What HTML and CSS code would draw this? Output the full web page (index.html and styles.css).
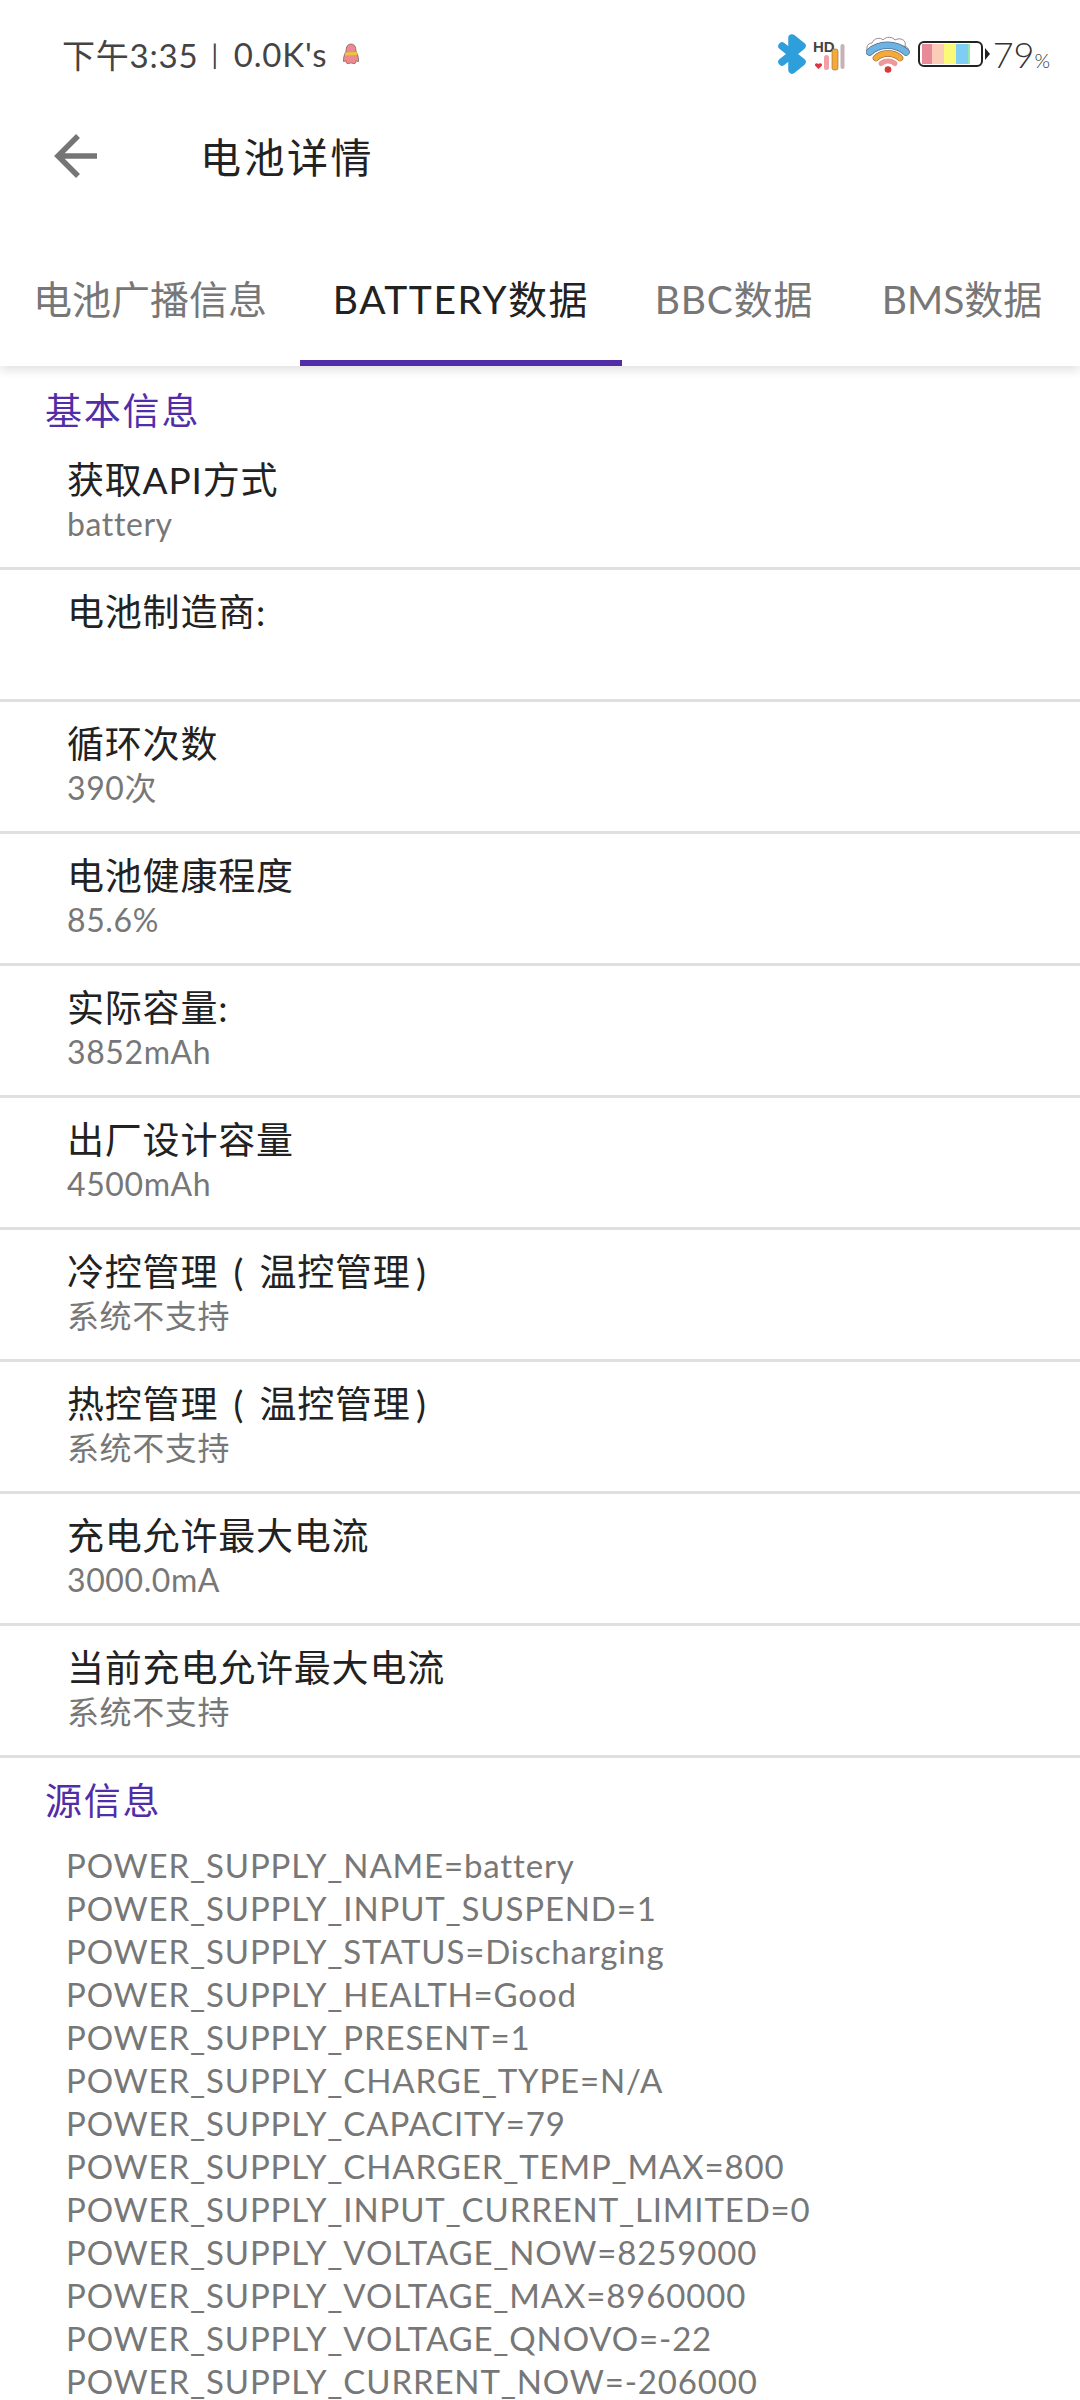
FILE: index.html
```html
<!DOCTYPE html>
<html>

<head>
  <meta charset="utf-8">
  <link rel="stylesheet" href="styles.css">
</head>

<body>

  <!-- status bar -->
  <div class="status">
    <div class="status-left">
      <span>下午3:35</span><span class="sep">|</span><span>0.0K's</span>
      <svg class="qq" width="18" height="22" viewBox="0 0 18 22">
        <path d="M9 1C5.500 1 4 4 4 8C2.500 11 1 15 1.500 18.500C3 18.500 3.500 18 4 17.500C4.500 19 3.500 20.500 6 20.500C7.500 20.500 8.500 20 9 20C9.500 20 10.500 20.500 12 20.500C14.500 20.500 13.500 19 14 17.500C14.500 18 15 18.500 16.500 18.500C17 15 15.500 11 14 8C14 4 12.500 1 9 1Z" fill="#ee8a8e" stroke="#5a4a4a" stroke-width="0.6" />
        <path d="M3 9.500L15 9L15 12L3 12.500Z" fill="#e6c83c" />
      </svg>
    </div>
    <div class="status-right">
      <!-- bluetooth -->
      <svg class="ic" width="29" height="42" viewBox="0 0 29 42">
        <path d="M4 13L24 29L14 37V5L24 13L4 29" fill="none" stroke="#2f9fdc" stroke-width="7.500" stroke-linecap="round" stroke-linejoin="round" />
      </svg>
      <!-- HD signal -->
      <svg class="ic ic-signal" width="32" height="34" viewBox="0 0 32 34">
        <text x="0" y="15" class="hd">HD</text>
        <path d="M5.500 32L2 28.500C1.500 26.500 4 25.500 5.500 27C7 25.500 9.500 26.500 9 28.500Z" fill="#d8383c" />
        <rect x="11" y="18" width="5" height="15" rx="2.500" fill="#f2a0a6" />
        <rect x="19" y="12" width="6" height="21" rx="2" fill="#f5a93a" stroke="#8a6a3a" stroke-width="0.6" />
        <rect x="27.500" y="7" width="4" height="25" rx="2" fill="#c6b2b6" />
      </svg>
      <!-- wifi -->
      <svg class="ic ic-wifi" width="44" height="38" viewBox="0 0 44 38">
        <path d="M3 19C-1 14 1 8 6 8C8 3 14 2 17 5C20 1 27 2 29 5C34 2 41 5 39 11C44 13 43 18 41 20" fill="#fff" stroke="#9c8a8e" stroke-width="1" />
        <path d="M3.500 17C13 8 30 8 40 17" fill="none" stroke="#5a6a80" stroke-width="7.500" stroke-linecap="round" />
        <path d="M3.500 17C13 8 30 8 40 17" fill="none" stroke="#6cb4e4" stroke-width="6" stroke-linecap="round" />
        <path d="M10 23C16 17 28 17 34 23" fill="none" stroke="#7a5a30" stroke-width="6.500" stroke-linecap="round" />
        <path d="M10 23C16 17 28 17 34 23" fill="none" stroke="#f5a93a" stroke-width="5.500" stroke-linecap="round" />
        <path d="M15 28.500C19 25 25 25 29 28.500" fill="none" stroke="#ef989c" stroke-width="5" stroke-linecap="round" />
        <circle cx="22" cy="34.500" r="3.300" fill="#d8383c" />
      </svg>
      <!-- battery -->
      <div class="battery">
        <div class="cell">
          <i class="b1"></i><i class="b2"></i><i class="b3"></i><i class="b4"></i><i class="b5"></i>
        </div>
        <div class="nub"></div>
      </div>
      <span class="pct">79<small>%</small></span>
    </div>
  </div>

  <!-- title -->
  <div class="toolbar">
    <svg class="back" width="44" height="46" viewBox="0 0 44 46">
      <path d="M43 23H5M24 3L4 23L24 43" fill="none" stroke="#757575" stroke-width="5.500" />
    </svg>
    <h1>电池详情</h1>
  </div>

  <!-- tabs -->
  <div class="tabs">
    <div class="tab t1">电池广播信息</div>
    <div class="tab t2 on">BATTERY数据</div>
    <div class="tab t3">BBC数据</div>
    <div class="tab t4">BMS数据</div>
  </div>

  <div class="section">基本信息</div>

  <div class="row">
    <p class="name">获取API方式</p>
    <p class="val">battery</p>
  </div>
  <div class="row">
    <p class="name">电池制造商:</p>
    <p class="val"></p>
  </div>
  <div class="row">
    <p class="name">循环次数</p>
    <p class="val">390次</p>
  </div>
  <div class="row">
    <p class="name">电池健康程度</p>
    <p class="val">85.6%</p>
  </div>
  <div class="row">
    <p class="name">实际容量:</p>
    <p class="val">3852mAh</p>
  </div>
  <div class="row">
    <p class="name">出厂设计容量</p>
    <p class="val">4500mAh</p>
  </div>
  <div class="row">
    <p class="name">冷控管理 ( 温控管理&thinsp;)</p>
    <p class="val">系统不支持</p>
  </div>
  <div class="row">
    <p class="name">热控管理 ( 温控管理&thinsp;)</p>
    <p class="val">系统不支持</p>
  </div>
  <div class="row">
    <p class="name">充电允许最大电流</p>
    <p class="val">3000.0mA</p>
  </div>
  <div class="row">
    <p class="name">当前充电允许最大电流</p>
    <p class="val">系统不支持</p>
  </div>

  <div class="section section-src">源信息</div>

  <div class="source">
    <div>POWER_SUPPLY_NAME=battery</div>
    <div>POWER_SUPPLY_INPUT_SUSPEND=1</div>
    <div>POWER_SUPPLY_STATUS=Discharging</div>
    <div>POWER_SUPPLY_HEALTH=Good</div>
    <div>POWER_SUPPLY_PRESENT=1</div>
    <div>POWER_SUPPLY_CHARGE_TYPE=N/A</div>
    <div>POWER_SUPPLY_CAPACITY=79</div>
    <div>POWER_SUPPLY_CHARGER_TEMP_MAX=800</div>
    <div>POWER_SUPPLY_INPUT_CURRENT_LIMITED=0</div>
    <div>POWER_SUPPLY_VOLTAGE_NOW=8259000</div>
    <div>POWER_SUPPLY_VOLTAGE_MAX=8960000</div>
    <div>POWER_SUPPLY_VOLTAGE_QNOVO=-22</div>
    <div>POWER_SUPPLY_CURRENT_NOW=-206000</div>
  </div>

</body>

</html>
```

FILE: styles.css
```css
html, body {
  margin: 0;
  height: 2400px;
  overflow: hidden;
  background: #fff;
}

body {
  font-family: Lato, "Noto Sans CJK SC", sans-serif;
}

p {
  margin: 0;
}

.status {
  display: flex;
  justify-content: space-between;
  align-items: center;
  height: 108px;
  padding: 0 30px 0 62px;
  color: #444;
}

.status-left {
  display: flex;
  align-items: center;
  font-size: 33px;
  letter-spacing: 0.800px;
}

.sep {
  margin: 0 15px 0 13px;
  font-size: 26px;
}

.qq {
  margin-left: 15px;
}

.status-right {
  display: flex;
  align-items: center;
}

.ic-signal {
  margin-left: 6px;
}

.ic-wifi {
  margin-left: 21px;
}

.hd {
  font-family: "Liberation Sans", sans-serif;
  font-size: 15px;
  font-weight: bold;
  fill: #444;
}

.battery {
  display: flex;
  align-items: center;
  margin-left: 8px;
}

.cell {
  display: flex;
  box-sizing: border-box;
  width: 65px;
  height: 26px;
  padding: 1px 2px;
  border: 2px solid #222;
  border-radius: 6px;
}

.cell i {
  display: block;
  height: 100%;
}

.b1 { width: 10px; background: #e88a98; }
.b2 { width: 12px; background: #fbcdb8; }
.b3 { width: 12px; background: #fafa78; }
.b4 { width: 12px; background: #7fcdf5; }
.b5 { width: 2px; background: #96e8a8; }

.nub {
  width: 0;
  height: 0;
  margin-left: 2px;
  border-top: 6px solid transparent;
  border-bottom: 6px solid transparent;
  border-left: 5px solid #222;
}

.pct {
  margin-left: 3px;
  font-size: 36px;
  font-weight: 300;
  color: #333;
}

.pct small {
  font-size: 20px;
}

.toolbar {
  display: flex;
  align-items: center;
  height: 96px;
  padding-left: 54px;
}

.back {
  margin-right: 102px;
}

h1 {
  margin: -2px 0 0;
  font-size: 41px;
  font-weight: 400;
  letter-spacing: 2.500px;
  color: #222;
}

.tabs {
  display: flex;
  height: 162px;
  box-shadow: 0 4px 10px rgba(0, 0, 0, 0.12);
  clip-path: inset(0 0 -20px 0);
}

.tab {
  display: flex;
  align-items: center;
  justify-content: center;
  position: relative;
  box-sizing: border-box;
  height: 100%;
  padding-top: 24px;
  font-size: 39px;
  color: #777;
  white-space: nowrap;
}

.t1 { width: 300px; }
.t2 { width: 322px; letter-spacing: 1.500px; }
.t3 { width: 224px; letter-spacing: 0.800px; }
.t4 { width: 232px; }

.tab.on {
  color: #222;
}

.tab.on::after {
  content: "";
  position: absolute;
  left: 0;
  right: 0;
  bottom: 0;
  height: 6px;
  background: #512da8;
}

.section {
  box-sizing: border-box;
  height: 72px;
  padding: 20px 0 0 45px;
  line-height: 50px;
  font-size: 37px;
  letter-spacing: 1.800px;
  color: #512da8;
}

.row {
  box-sizing: border-box;
  height: 132px;
  padding: 17px 67px 0;
  border-bottom: 3px solid #e0e0e0;
}

.name {
  height: 50px;
  line-height: 50px;
  font-size: 37px;
  letter-spacing: 0.800px;
  word-spacing: 5px;
  color: #222;
}

.val {
  height: 37px;
  line-height: 37px;
  font-size: 32px;
  letter-spacing: 0.600px;
  color: #777;
}

.section-src {
  height: 74px;
  padding-top: 18px;
}

.source {
  padding: 12px 0 0 66px;
  font-size: 33px;
  line-height: 43px;
  letter-spacing: 0.850px;
  color: #777;
  white-space: nowrap;
}
```
